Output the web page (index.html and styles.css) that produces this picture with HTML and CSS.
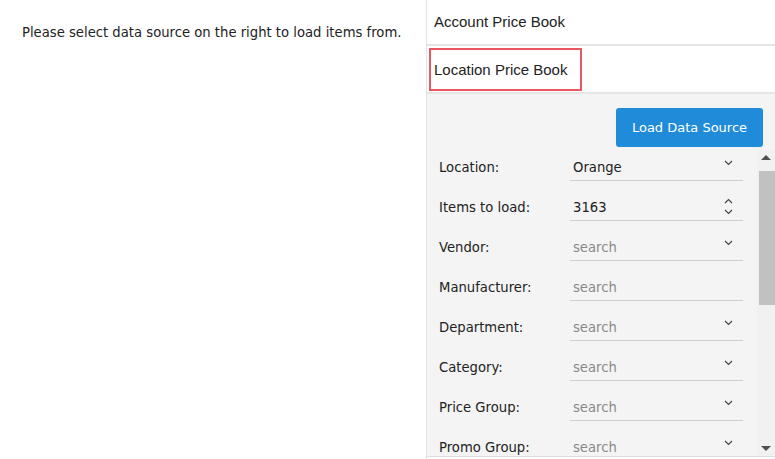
FILE: index.html
```html
<!DOCTYPE html>
<html lang="en">
<head>
    <meta charset="UTF-8">
    <meta name="viewport" content="width=device-width, initial-scale=1.0">
    <title>Load Items</title>
    <link rel="stylesheet" href="styles.css">
</head>
<body>
    <div class="layout">
        <div class="message">
            <p>Please select data source on the right to load items from.</p>
        </div>

        <div class="panel">
            <div class="tab">Account Price Book</div>
            <div class="tab tab-location">
                <span class="tab-selected">Location Price Book</span>
            </div>

            <div class="source">
                <div class="button-container">
                    <button class="load-btn">Load Data Source</button>
                </div>

                <div class="scroll-area">
                    <div class="fields">
                        <div class="field">
                            <label>Location:</label>
                            <div class="input">
                                <span class="value">Orange</span>
                                <svg class="chevron" width="9" height="6" viewBox="0 0 9 6"><polyline points="1,1 4.5,4.5 8,1" fill="none" stroke="#444" stroke-width="1.2"/></svg>
                            </div>
                        </div>
                        <div class="field">
                            <label>Items to load:</label>
                            <div class="input">
                                <span class="value">3163</span>
                                <span class="spinner">
                                    <svg width="9" height="6" viewBox="0 0 9 6"><polyline points="1,5 4.5,1.5 8,5" fill="none" stroke="#444" stroke-width="1.2"/></svg>
                                    <svg width="9" height="6" viewBox="0 0 9 6"><polyline points="1,1 4.5,4.5 8,1" fill="none" stroke="#444" stroke-width="1.2"/></svg>
                                </span>
                            </div>
                        </div>
                        <div class="field">
                            <label>Vendor:</label>
                            <div class="input">
                                <span class="placeholder">search</span>
                                <svg class="chevron" width="9" height="6" viewBox="0 0 9 6"><polyline points="1,1 4.5,4.5 8,1" fill="none" stroke="#444" stroke-width="1.2"/></svg>
                            </div>
                        </div>
                        <div class="field">
                            <label>Manufacturer:</label>
                            <div class="input">
                                <span class="placeholder">search</span>
                            </div>
                        </div>
                        <div class="field">
                            <label>Department:</label>
                            <div class="input">
                                <span class="placeholder">search</span>
                                <svg class="chevron" width="9" height="6" viewBox="0 0 9 6"><polyline points="1,1 4.5,4.5 8,1" fill="none" stroke="#444" stroke-width="1.2"/></svg>
                            </div>
                        </div>
                        <div class="field">
                            <label>Category:</label>
                            <div class="input">
                                <span class="placeholder">search</span>
                                <svg class="chevron" width="9" height="6" viewBox="0 0 9 6"><polyline points="1,1 4.5,4.5 8,1" fill="none" stroke="#444" stroke-width="1.2"/></svg>
                            </div>
                        </div>
                        <div class="field">
                            <label>Price Group:</label>
                            <div class="input">
                                <span class="placeholder">search</span>
                                <svg class="chevron" width="9" height="6" viewBox="0 0 9 6"><polyline points="1,1 4.5,4.5 8,1" fill="none" stroke="#444" stroke-width="1.2"/></svg>
                            </div>
                        </div>
                        <div class="field">
                            <label>Promo Group:</label>
                            <div class="input">
                                <span class="placeholder">search</span>
                                <svg class="chevron" width="9" height="6" viewBox="0 0 9 6"><polyline points="1,1 4.5,4.5 8,1" fill="none" stroke="#444" stroke-width="1.2"/></svg>
                            </div>
                        </div>
                    </div>

                    <div class="scrollbar">
                        <div class="arrow arrow-up"></div>
                        <div class="thumb"></div>
                        <div class="track"></div>
                        <div class="arrow arrow-down"></div>
                    </div>
                </div>
            </div>
        </div>
    </div>
</body>
</html>
```

FILE: styles.css
```css
body {
    margin: 0;
    padding: 0;
    font-family: "DejaVu Sans", Verdana, sans-serif;
    font-size: 13.2px;
    color: #222;
    background-color: #fff;
}
.layout {
    display: flex;
    height: 459px;
    overflow: hidden;
}
.message {
    width: 426px;
    flex-shrink: 0;
}
.message p {
    margin: 25px 0 0 22px;
    font-size: 13.2px;
}
.panel {
    flex: 1;
    border-left: 1px solid #e2e2e2;
    display: flex;
    flex-direction: column;
}
.tab {
    height: 46px;
    border-bottom: 2px solid #e6e6e6;
    display: flex;
    align-items: center;
    padding-left: 7px;
    padding-bottom: 2px;
    box-sizing: border-box;
    font-family: "Liberation Sans", Arial, sans-serif;
    font-size: 15px;
    color: #222;
}
.tab-location {
    height: 48px;
    align-items: flex-start;
    padding-top: 2px;
    padding-bottom: 0;
}
.tab-selected {
    margin-left: -5px;
    padding: 11px 13px 10px 3px;
    line-height: 18px;
    border: 2px solid #e8585e;
}
.source {
    background-color: #f4f4f4;
    height: 362px;
    border-bottom: 1px solid #dcdcdc;
    display: flex;
    flex-direction: column;
}
.button-container {
    display: flex;
    justify-content: flex-end;
    padding: 14px 12px 3px 0;
}
.load-btn {
    width: 147px;
    height: 39px;
    border: none;
    border-radius: 3px;
    background-color: #1f8bd9;
    color: #fff;
    font-family: "DejaVu Sans", Verdana, sans-serif;
    font-size: 13px;
    cursor: pointer;
}
.scroll-area {
    flex: 1;
    display: flex;
    overflow: hidden;
}
.fields {
    flex: 1;
    padding: 3px 14px 0 12px;
}
.field {
    display: flex;
    align-items: flex-start;
    height: 40px;
}
.field label {
    width: 131px;
    line-height: 20px;
    padding-top: 5px;
    color: #222;
}
.input {
    flex: 1;
    height: 26px;
    border-bottom: 1px solid #cfcfcf;
    display: flex;
    align-items: center;
    padding: 1px 10px 0 3px;
}
.value {
    flex: 1;
    color: #222;
}
.placeholder {
    flex: 1;
    color: #8a8a8a;
}
.chevron {
    margin-top: -8px;
}
.spinner {
    display: flex;
    flex-direction: column;
    gap: 5px;
    margin-top: -1px;
}
.scrollbar {
    width: 18px;
    display: flex;
    flex-direction: column;
    background-color: #f1f1f1;
}
.arrow {
    height: 17px;
    position: relative;
}
.arrow-up::after, .arrow-down::after {
    content: "";
    position: absolute;
    left: 4px;
    border-left: 5px solid transparent;
    border-right: 5px solid transparent;
}
.arrow-up::after {
    top: 5px;
    border-bottom: 5px solid #505050;
}
.arrow-down::after {
    top: 7px;
    border-top: 5px solid #505050;
}
.thumb {
    height: 134px;
    margin: 4px 0 0 2px;
    background-color: #c1c1c1;
}
.track {
    flex: 1;
}
```
